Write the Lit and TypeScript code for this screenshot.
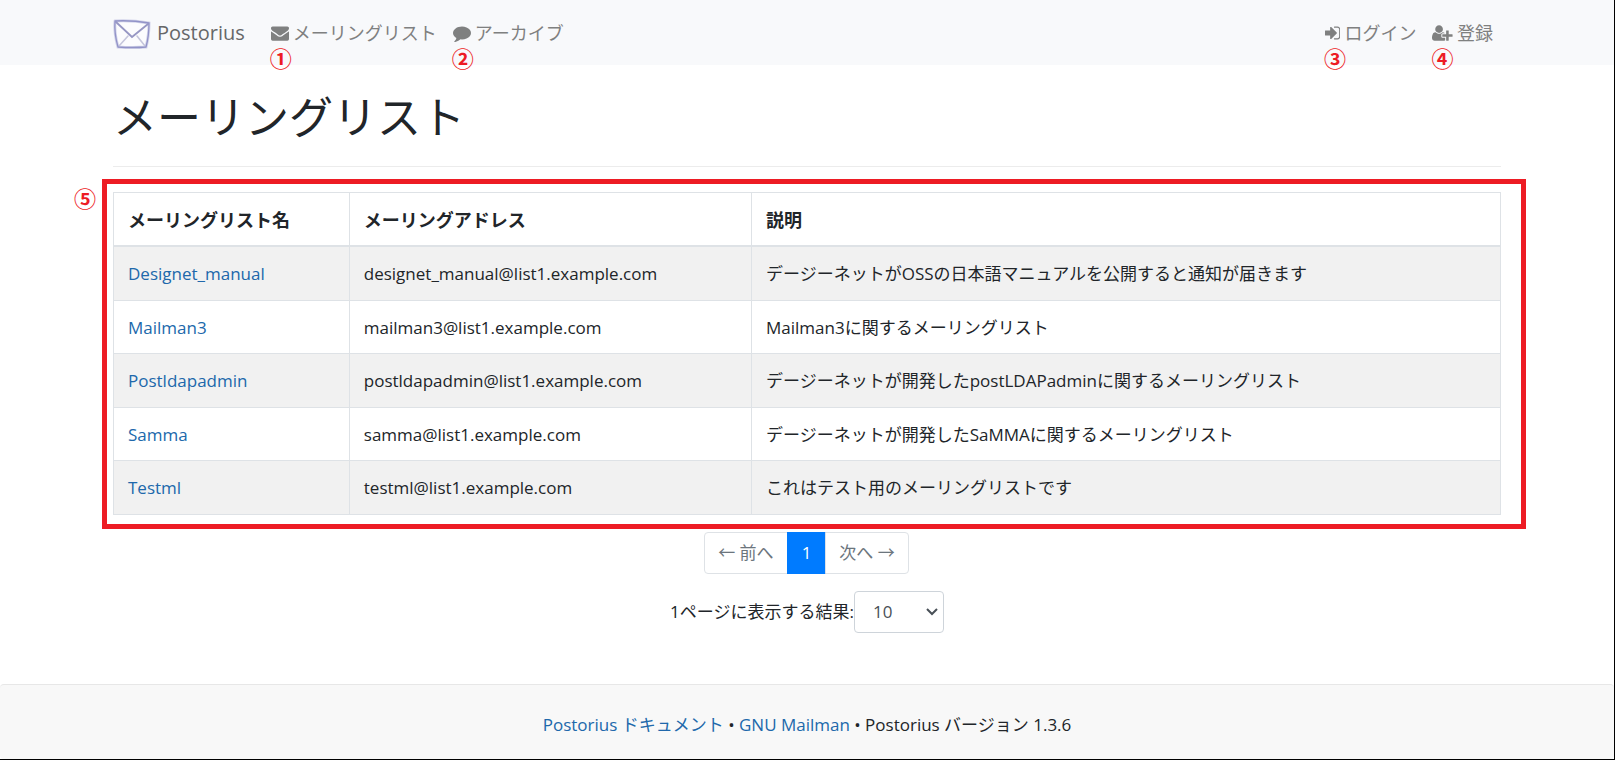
import { LitElement, html, css, svg } from "lit";
import { customElement, property } from "lit/decorators.js";

interface MailingList {
  name: string;
  address: string;
  description: string;
}

const LISTS: MailingList[] = [
  { name: "Designet_manual", address: "designet_manual@list1.example.com", description: "デージーネットがOSSの日本語マニュアルを公開すると通知が届きます" },
  { name: "Mailman3", address: "mailman3@list1.example.com", description: "Mailman3に関するメーリングリスト" },
  { name: "Postldapadmin", address: "postldapadmin@list1.example.com", description: "デージーネットが開発したpostLDAPadminに関するメーリングリスト" },
  { name: "Samma", address: "samma@list1.example.com", description: "デージーネットが開発したSaMMAに関するメーリングリスト" },
  { name: "Testml", address: "testml@list1.example.com", description: "これはテスト用のメーリングリストです" },
];

const ICONS = {
  envelope: {
    box: "0 0 1792 1792",
    path: "M1792 710v794q0 66-47 113t-113 47h-1472q-66 0-113-47t-47-113v-794q44 49 101 87 362 246 497 345 57 42 92.5 65.5t94.5 48 110 24.5h2q51 0 110-24.5t94.5-48 92.5-65.5q170-123 498-345 57-39 100-87zm0-294q0 79-49 151t-122 123q-376 261-468 325-10 7-42.5 31t-54 38.5-52 32.5-57.5 27-50 9h-2q-23 0-50-9t-57.5-27-52-32.5-54-38.5-42.5-31q-91-64-262-182.5t-205-142.5q-62-42-117-115.5t-55-136.5q0-78 41.5-130t118.5-52h1472q65 0 112.5 47t47.5 113z",
  },
  comment: {
    box: "0 0 1792 1792",
    path: "M1792 896q0 174-120 321.5t-326 233-450 85.5q-70 0-145-8-198 175-460 242-49 14-114 22-17 2-30.5-9t-17.5-29v-1q-3-4-.5-12t2-10 4.5-9.5l6-9 7-8.5 8-9q7-8 31-34.5t34.5-38 31-39.5 32.5-51 27-59 26-76q-157-89-247.5-220t-90.5-281q0-130 71-248.5t191-204.5 286-136.5 348-50.5q244 0 450 85.5t326 233 120 321.5z",
  },
  signIn: {
    box: "128 0 1536 1792",
    path: "M1312 896q0 26-19 45l-544 544q-19 19-45 19t-45-19-19-45v-288h-448q-26 0-45-19t-19-45v-384q0-26 19-45t45-19h448v-288q0-26 19-45t45-19 45 19l544 544q19 19 19 45zm352-352v704q0 119-84.5 203.5t-203.5 84.5h-320q-13 0-22.5-9.5t-9.5-22.5q0-4-1-20t-.5-26.5 3-23.5 10-19.5 20.5-6.5h320q66 0 113-47t47-113v-704q0-66-47-113t-113-47h-312l-11.5-1-11.5-3-8-5.5-7-9-2-13.5q0-4-1-20t-.5-26.5 3-23.5 10-19.5 20.5-6.5h320q119 0 203.5 84.5t84.5 203.5z",
  },
  userPlus: {
    box: "0 0 2048 1792",
    path: "M704 896q-159 0-271.5-112.5t-112.5-271.5 112.5-271.5 271.5-112.5 271.5 112.5 112.5 271.5-112.5 271.5-271.5 112.5zm960 128h352q13 0 22.5 9.5t9.5 22.5v192q0 13-9.5 22.5t-22.5 9.5h-352v352q0 13-9.5 22.5t-22.5 9.5h-192q-13 0-22.5-9.5t-9.5-22.5v-352h-352q-13 0-22.5-9.5t-9.5-22.5v-192q0-13 9.5-22.5t22.5-9.5h352v-352q0-13 9.5-22.5t22.5-9.5h192q13 0 22.5 9.5t9.5 22.5v352zm-736 224q0 52 38 90t90 38h256v238q-68 50-171 50h-874q-121 0-194-69t-73-190q0-53 3.5-103.5t14-109 26.5-108.5 43-97.5 62-81 85.5-53.5 111.5-20q19 0 39 17 79 61 154.5 91.5t164.5 30.5 164.5-30.5 154.5-91.5q20-17 39-17 132 0 217 96h-223q-52 0-90 38t-38 90v192z",
  },
};

type IconName = keyof typeof ICONS;

@customElement("nav-item")
class NavItem extends LitElement {
  @property() icon: IconName = "envelope";
  @property() label = "";
  @property() mark = "";

  static styles = css`
    :host { display: block; position: relative; }
    .link {
      display: flex;
      align-items: center;
      gap: 4px;
      padding: 0 8px;
      color: #7f8080;
      text-decoration: none;
    }
    .icon { height: 18px; fill: currentColor; }
    .mark {
      position: absolute;
      left: 7px;
      top: 27px;
      color: #ed1c24;
      font-size: 22px;
      font-weight: 700;
      line-height: 22px;
    }
  `;

  render() {
    const icon = ICONS[this.icon];
    return html`
      <a class="link" href="#">
        <svg class="icon" viewBox=${icon.box} aria-hidden="true">${svg`<path d=${icon.path} />`}</svg>
        <span>${this.label}</span>
      </a>
      <span class="mark">${this.mark}</span>
    `;
  }
}

@customElement("app-root")
class AppRoot extends LitElement {
  static styles = css`
    :host {
      display: flex;
      flex-direction: column;
      box-sizing: border-box;
      min-height: 100vh;
      border: 0 solid #000;
      border-width: 0 1px 1px 0;
      background: #fff;
      color: #212529;
      font-family: "Open Sans", "Noto Sans CJK JP", sans-serif;
      font-size: 17px;
      line-height: 26px;
    }
    * { box-sizing: border-box; }
    a { color: #2068ab; text-decoration: none; }
    .container { max-width: 1388px; margin: 0 auto; }
    .navbar { background: #f8f9fb; }
    .bar {
      display: flex;
      align-items: center;
      height: 65px;
      font-size: 18px;
    }
    .brand {
      display: flex;
      align-items: center;
      gap: 6px;
      margin-right: 18px;
      color: #666768;
      font-size: 20px;
    }
    .logo { width: 38px; height: 34px; }
    .spacer { flex: 1; }
    .title {
      margin: 0;
      padding: 26px 0 22px;
      border-bottom: 1px solid #ececec;
      font-size: 44px;
      font-weight: 400;
      line-height: 53px;
    }
    .lists { position: relative; margin-top: 25px; }
    .frame {
      position: absolute;
      inset: -13px -25px -14px -11px;
      border: 5px solid #ed1c24;
      pointer-events: none;
    }
    .mark {
      position: absolute;
      left: -39px;
      top: -5px;
      color: #ed1c24;
      font-size: 22px;
      font-weight: 700;
      line-height: 22px;
    }
    .table { width: 100%; border-collapse: collapse; }
    .table th, .table td {
      padding: 14px 14px 12px;
      border: 1px solid #dee2e6;
      text-align: left;
    }
    .table thead th { border-bottom-width: 2px; font-size: 18px; font-weight: 700; }
    .table tbody tr:nth-child(odd) td { padding-bottom: 13px; background: #f1f1f1; }
    .col-name { width: 17%; }
    .col-address { width: 29%; }
    .pager {
      display: flex;
      justify-content: center;
      margin: 17px 0;
    }
    .page {
      height: 42px;
      margin: 0 0 0 -1px;
      padding: 0 13px;
      border: 1px solid #dee2e6;
      background: #fff;
      color: #6c757d;
      font: inherit;
    }
    .page.first { border-radius: 4px 0 0 4px; }
    .page.last { border-radius: 0 4px 4px 0; }
    .page.current { padding: 0 14px; border-color: #007bff; background: #007bff; color: #fff; }
    .size {
      display: flex;
      justify-content: center;
      align-items: center;
    }
    .picker { position: relative; display: flex; }
    .select {
      width: 90px;
      height: 42px;
      padding: 0 18px;
      border: 1px solid #ced4da;
      border-radius: 4px;
      background: #fff;
      color: #495057;
      font: inherit;
      appearance: none;
    }
    .chevron {
      position: absolute;
      right: 6px;
      top: 15px;
      width: 12px;
      height: 12px;
      fill: none;
      stroke: #495057;
      stroke-width: 2;
      pointer-events: none;
    }
    .footer {
      flex: 1;
      margin-top: 51px;
      padding: 27px 16px 16px;
      border: 1px solid #e7e7e7;
      border-width: 1px 0 0;
      border-radius: 4px;
      background: #f8f8f8;
      text-align: center;
    }
  `;

  render() {
    return html`
      <header class="navbar">
        <nav class="container bar">
          <a class="brand" href="#">
            <svg class="logo" viewBox="0 0 38 34" fill="none" stroke-linecap="round" aria-hidden="true">
              <path d="M2 5 Q18 4 36 7 Q36 20 33 31 Q20 32 5 31 Q1 17 2 5" fill="#fcfcfe" stroke="#d3d4ea" stroke-width="3" />
              <path d="M6 30 L15 20 M32 30 L24 20" stroke="#c6c6dc" stroke-width="1.6" />
              <path d="M3 6 L19 21 L35 8" stroke="#9797c4" stroke-width="1.8" />
              <path d="M2 5 Q18 4 36 7 Q36 20 33 31 Q20 32 5 31 Q1 17 2 5" stroke="#9293c8" stroke-width="1.3" />
            </svg>
            <span>Postorius</span>
          </a>
          <nav-item icon="envelope" label="メーリングリスト" mark="①"></nav-item>
          <nav-item icon="comment" label="アーカイブ" mark="②"></nav-item>
          <span class="spacer"></span>
          <nav-item icon="signIn" label="ログイン" mark="③"></nav-item>
          <nav-item icon="userPlus" label="登録" mark="④"></nav-item>
        </nav>
      </header>
      <main>
        <div class="container">
          <h1 class="title">メーリングリスト</h1>
          <section class="lists">
            <table class="table">
              <thead>
                <tr>
                  <th class="col-name" scope="col">メーリングリスト名</th>
                  <th class="col-address" scope="col">メーリングアドレス</th>
                  <th scope="col">説明</th>
                </tr>
              </thead>
              <tbody>
                ${LISTS.map(
                  (list) => html`<tr>
                    <td><a href="#">${list.name}</a></td>
                    <td>${list.address}</td>
                    <td>${list.description}</td>
                  </tr>`
                )}
              </tbody>
            </table>
            <div class="frame"></div>
            <span class="mark">⑤</span>
          </section>
          <div class="pager">
            <button class="page first" type="button">← 前へ</button>
            <button class="page current" type="button">1</button>
            <button class="page last" type="button">次へ →</button>
          </div>
          <div class="size">
            <label for="page-size">1ページに表示する結果:</label>
            <span class="picker">
              <select class="select" id="page-size">
                <option>10</option>
                <option>50</option>
                <option>100</option>
              </select>
              <svg class="chevron" viewBox="0 0 12 12" aria-hidden="true"><path d="M1 3 L6 8 L11 3" /></svg>
            </span>
          </div>
        </div>
      </main>
      <footer class="footer">
        <a href="#">Postorius ドキュメント</a> • <a href="#">GNU Mailman</a> • Postorius バージョン 1.3.6
      </footer>
    `;
  }
}
